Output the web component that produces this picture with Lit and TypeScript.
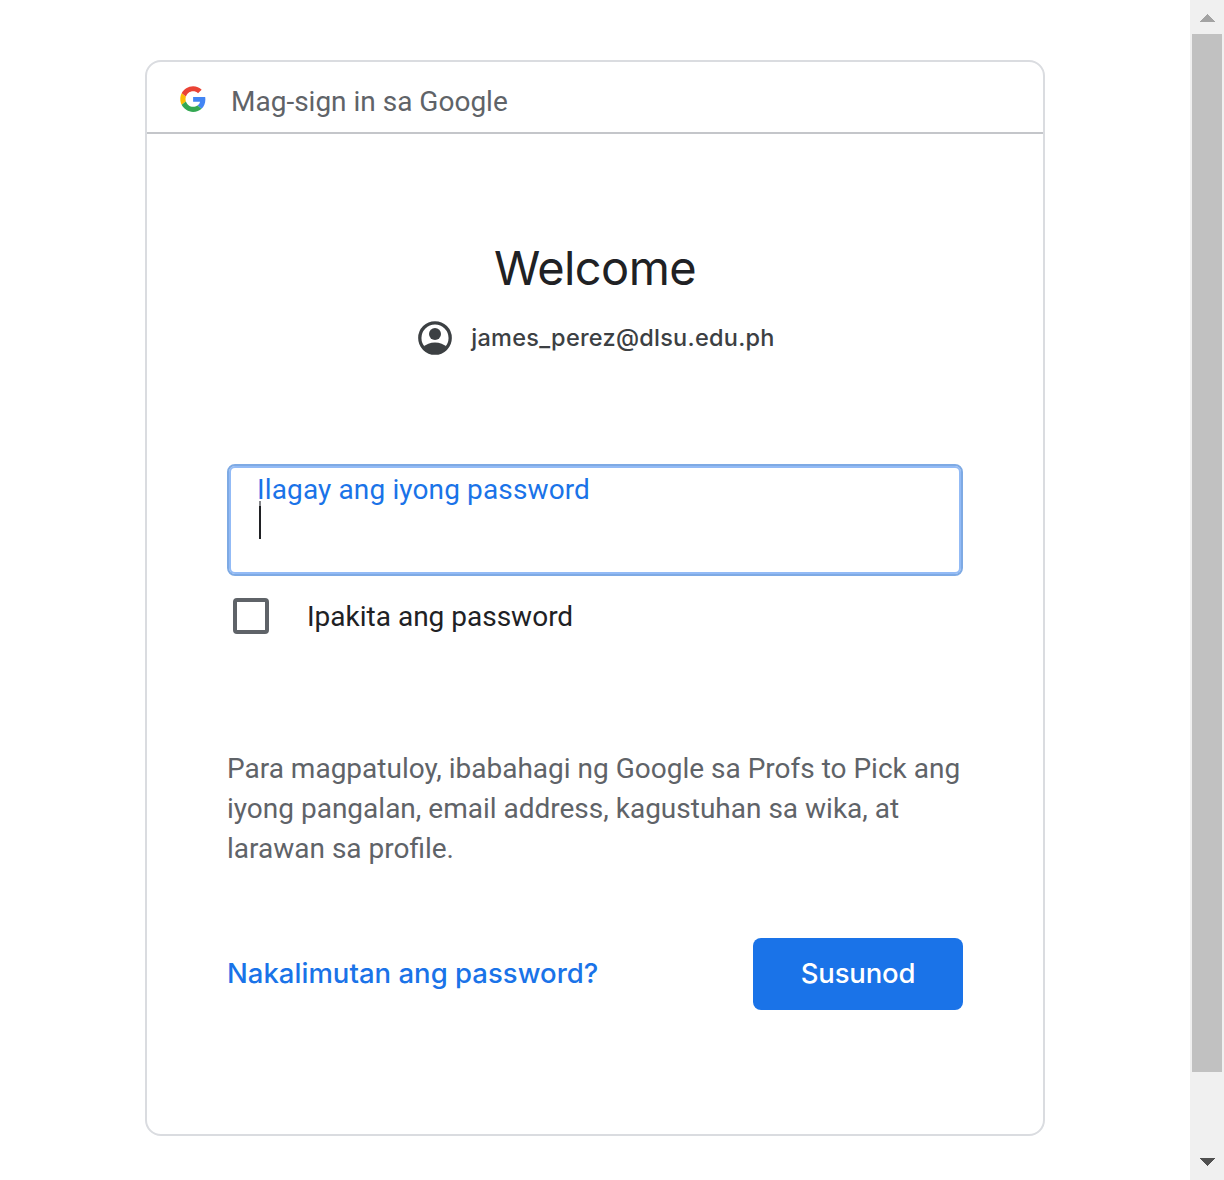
import { LitElement, html, css } from "lit";
import { customElement } from "lit/decorators.js";

@customElement("app-root")
export class AppRoot extends LitElement {
  static styles = css`
    :host {
      display: flex;
      height: 1180px;
      overflow: hidden;
      background: #fff;
      font-family: Roboto, "Liberation Sans", sans-serif;
      font-size: 28px;
      color: #202124;
    }
    * { box-sizing: border-box; }
    .page { flex: 1; padding-top: 60px; }
    .card {
      width: 900px;
      height: 1076px;
      margin: 0 auto;
      border: 2px solid #dadce0;
      border-radius: 16px;
    }
    .header {
      display: flex;
      align-items: center;
      height: 72px;
      padding-left: 33px;
      border-bottom: 2px solid #c4c6ca;
      color: #5f6368;
    }
    .logo { display: block; width: 26px; height: 26px; margin: 3px 25px 0 0; }
    .title { line-height: 40px; padding-top: 10px; }
    .content { padding: 102px 80px 0; }
    h1 {
      margin: 0;
      text-align: center;
      font: 400 47px/64px Inter, Lato, sans-serif;
      letter-spacing: -0.6px;
    }
    .account {
      display: flex;
      justify-content: center;
      align-items: center;
      height: 40px;
      margin-top: 18px;
      padding-right: 1px;
      font: 500 23.5px/40px Inter, Lato, sans-serif;
      letter-spacing: 0.256px;
      color: #3c4043;
    }
    .avatar { display: block; width: 40px; height: 40px; margin: 0 16px 0 1px; }
    .field {
      height: 112px;
      margin-top: 106px;
      padding: 4px 28px 0;
      border: 2px solid #7eaae4;
      border-radius: 8px;
      box-shadow: inset 0 0 0 2px #93bbf6;
    }
    .label {
      position: relative;
      z-index: 1;
      line-height: 40px;
      color: #1a73e8;
      letter-spacing: 0.13px;
    }
    .caret { width: 2px; height: 38px; margin-top: -9px; margin-left: 2px; background: linear-gradient(#85868a 5px, #202124 5px); }
    .show {
      display: flex;
      align-items: center;
      height: 40px;
      margin-top: 20px;
      padding-left: 6px;
      line-height: 40px;
    }
    .show span { padding-top: 2px; }
    .box { width: 36px; height: 36px; margin-right: 38px; border: 4px solid #5f6368; border-radius: 4px; }
    .notice { margin: 113px -4px 0 0; line-height: 40px; color: #5f6368; }
    .actions {
      display: flex;
      justify-content: space-between;
      align-items: center;
      height: 72px;
      margin-top: 69px;
      font: 500 27.5px/40px Inter, Lato, sans-serif;
    }
    .forgot { color: #1a73e8; letter-spacing: 0.02px; padding-bottom: 2px; }
    .next {
      width: 210px;
      height: 72px;
      border: 0;
      padding: 0 0 2px;
      border-radius: 8px;
      background: #1a73e8;
      color: #fff;
      font: inherit;
      font-weight: 550;
      letter-spacing: -0.2px;
    }
    .scroll {
      display: flex;
      flex-direction: column;
      justify-content: space-between;
      width: 34px;
      background: #f0f0f0;
    }
    .scroll svg { display: block; width: 34px; height: 34px; }
    .thumb { height: 1038px; margin: 0 2px auto; background: #c1c1c1; }
  `;

  render() {
    return html`
      <div class="page">
        <main class="card">
          <header class="header">
            <svg class="logo" viewBox="1.5 1.5 44.8 44.8">
              <path fill="#EA4335" d="M24 9.5c3.54 0 6.71 1.22 9.21 3.6l6.85-6.85C35.9 2.38 30.47 0 24 0 14.62 0 6.51 5.38 2.56 13.22l7.98 6.19C12.43 13.72 17.74 9.5 24 9.5z" transform="translate(2 2) scale(.92)"/>
              <path fill="#4285F4" d="M46.98 24.55c0-1.57-.15-3.09-.38-4.55H24v9.02h12.94c-.58 2.96-2.26 5.48-4.78 7.18l7.73 6c4.51-4.18 7.09-10.36 7.09-17.65z" transform="translate(2 2) scale(.92)"/>
              <path fill="#FBBC05" d="M10.53 28.59c-.48-1.45-.76-2.99-.76-4.59s.27-3.14.76-4.59l-7.98-6.19C.92 16.46 0 20.12 0 24c0 3.88.92 7.54 2.56 10.78l7.97-6.19z" transform="translate(2 2) scale(.92)"/>
              <path fill="#34A853" d="M24 48c6.48 0 11.93-2.13 15.89-5.81l-7.73-6c-2.15 1.45-4.92 2.3-8.16 2.3-6.26 0-11.57-4.22-13.47-9.91l-7.98 6.19C6.51 42.62 14.62 48 24 48z" transform="translate(2 2) scale(.92)"/>
            </svg>
            <div class="title">Mag-sign in sa Google</div>
          </header>
          <div class="content">
            <h1>Welcome</h1>
            <div class="account">
              <svg class="avatar" viewBox="0 0 40 40">
                <circle cx="20" cy="20" r="15.2" fill="none" stroke="#3c4043" stroke-width="3.3"/>
                <circle cx="20" cy="15.900" r="6" fill="#3c4043"/>
                <path fill="#3c4043" d="M8 29.200C11 26.200 15.300 24.500 20 24.500S29 26.200 32 29.200C29.200 33.500 25 36 20 36S10.800 33.500 8 29.200z"/>
              </svg>
              <span>james_perez@dlsu.edu.ph</span>
            </div>
            <div class="field">
              <div class="label">Ilagay ang iyong password</div>
              <div class="caret"></div>
            </div>
            <div class="show">
              <div class="box"></div>
              <span>Ipakita ang password</span>
            </div>
            <div class="notice">
              Para magpatuloy, ibabahagi ng Google sa Profs to Pick ang iyong
              pangalan, email address, kagustuhan sa wika, at larawan sa profile.
            </div>
            <div class="actions">
              <span class="forgot">Nakalimutan ang password?</span>
              <button class="next">Susunod</button>
            </div>
          </div>
        </main>
      </div>
      <div class="scroll">
        <svg viewBox="0 0 34 34" shape-rendering="crispEdges"><path fill="#a3a3a3" d="M9 22L17 14L25 22z"/></svg>
        <div class="thumb"></div>
        <svg viewBox="0 0 34 34" shape-rendering="crispEdges"><path fill="#505050" d="M9 12L25 12L17 20z"/></svg>
      </div>
    `;
  }
}
